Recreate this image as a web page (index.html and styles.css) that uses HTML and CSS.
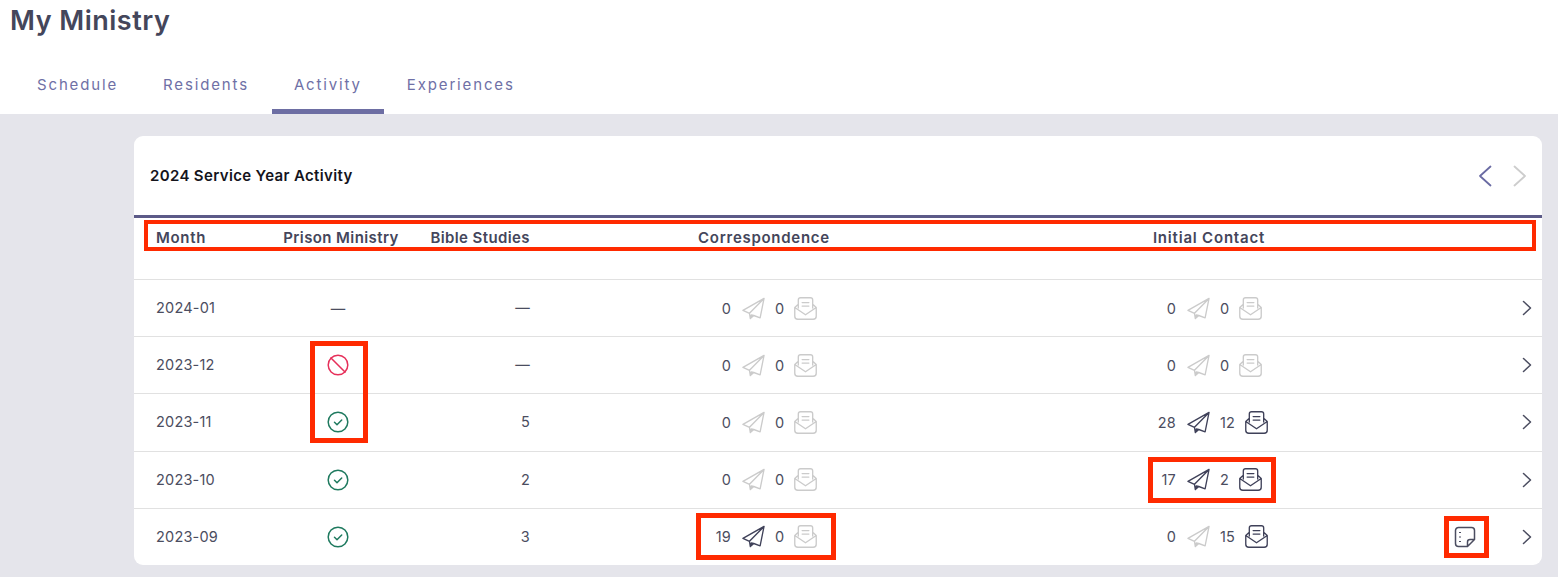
FILE: index.html
```html
<!DOCTYPE html>
<html lang="en">
<head>
<meta charset="utf-8">
<title>My Ministry</title>
<link rel="stylesheet" href="styles.css">
</head>
<body>
<svg class="sprite" aria-hidden="true">
  <symbol id="plane" viewBox="0 0 24 24"><path d="M23 1.500 1 14l6.800 3 .9 5.500 3.600-3.200 6.600 2.400zM23 1.500 7.800 17M8.700 22.500l1-3.700 2.600.5"/></symbol>
  <symbol id="mail" viewBox="0 0 24 24"><path d="M4.500 11.500V3A2.300 2.300 0 0 1 6.800.8h10.400A2.300 2.300 0 0 1 19.500 3v8.500M8.500 5.800h7M8.500 9.500h7M4.500 7.500.8 11v9a3.200 3.200 0 0 0 3.200 3.200h16a3.200 3.200 0 0 0 3.200-3.200v-9l-3.700-3.500M.8 11 12 18.500 23.200 11"/></symbol>
</svg>
<header class="top">
  <h1 class="title">My Ministry</h1>
  <nav class="tabs">
    <a class="tab">Schedule</a>
    <a class="tab">Residents</a>
    <a class="tab tab-active">Activity</a>
    <a class="tab">Experiences</a>
  </nav>
</header>
<main class="content">
  <section class="card">
    <div class="card-head">
      <h2 class="card-title">2024 Service Year Activity</h2>
      <div class="pager">
        <svg class="pager-icon pager-on" viewBox="0 0 14 22"><path d="M12.500 1.500 2 11l10.500 9.500"/></svg>
        <svg class="pager-icon pager-off" viewBox="0 0 14 22"><path d="M1.500 1.500 12 11 1.500 20.500"/></svg>
      </div>
    </div>
    <div class="grid head-row">
      <div class="h-month">Month</div>
      <div class="h-prison">Prison Ministry</div>
      <div class="h-bible">Bible Studies</div>
      <div class="h-corr">Correspondence</div>
      <div class="h-init">Initial Contact</div>
    </div>

    <div class="grid row">
      <div class="month">2024-01</div>
      <div class="prison">—</div>
      <div class="bible">—</div>
      <div class="out">0<svg class="ico off"><use href="#plane"/></svg></div>
      <div class="in">0<svg class="ico off"><use href="#mail"/></svg></div>
      <div class="out">0<svg class="ico off"><use href="#plane"/></svg></div>
      <div class="in">0<svg class="ico off"><use href="#mail"/></svg></div>
      <div class="note"></div>
      <div class="more"><svg class="chev" viewBox="0 0 10 16"><path d="M1.500 1.500 8.500 8l-7 6.500"/></svg></div>
    </div>

    <div class="grid row">
      <div class="month">2023-12</div>
      <div class="prison"><svg class="status ban" viewBox="0 0 22 22"><circle cx="11" cy="11" r="9.800"/><path d="M4 4l14 14"/></svg></div>
      <div class="bible">—</div>
      <div class="out">0<svg class="ico off"><use href="#plane"/></svg></div>
      <div class="in">0<svg class="ico off"><use href="#mail"/></svg></div>
      <div class="out">0<svg class="ico off"><use href="#plane"/></svg></div>
      <div class="in">0<svg class="ico off"><use href="#mail"/></svg></div>
      <div class="note"></div>
      <div class="more"><svg class="chev" viewBox="0 0 10 16"><path d="M1.500 1.500 8.500 8l-7 6.500"/></svg></div>
    </div>

    <div class="grid row">
      <div class="month">2023-11</div>
      <div class="prison"><svg class="status ok" viewBox="0 0 22 22"><circle cx="11" cy="11" r="9.800"/><path d="M7.500 11.300l2.500 2.400 4.700-4.700"/></svg></div>
      <div class="bible">5</div>
      <div class="out">0<svg class="ico off"><use href="#plane"/></svg></div>
      <div class="in">0<svg class="ico off"><use href="#mail"/></svg></div>
      <div class="out">28<svg class="ico on"><use href="#plane"/></svg></div>
      <div class="in">12<svg class="ico on"><use href="#mail"/></svg></div>
      <div class="note"></div>
      <div class="more"><svg class="chev" viewBox="0 0 10 16"><path d="M1.500 1.500 8.500 8l-7 6.500"/></svg></div>
    </div>

    <div class="grid row">
      <div class="month">2023-10</div>
      <div class="prison"><svg class="status ok" viewBox="0 0 22 22"><circle cx="11" cy="11" r="9.800"/><path d="M7.500 11.300l2.500 2.400 4.700-4.700"/></svg></div>
      <div class="bible">2</div>
      <div class="out">0<svg class="ico off"><use href="#plane"/></svg></div>
      <div class="in">0<svg class="ico off"><use href="#mail"/></svg></div>
      <div class="out">17<svg class="ico on"><use href="#plane"/></svg></div>
      <div class="in">2<svg class="ico on"><use href="#mail"/></svg></div>
      <div class="note"></div>
      <div class="more"><svg class="chev" viewBox="0 0 10 16"><path d="M1.500 1.500 8.500 8l-7 6.500"/></svg></div>
    </div>

    <div class="grid row">
      <div class="month">2023-09</div>
      <div class="prison"><svg class="status ok" viewBox="0 0 22 22"><circle cx="11" cy="11" r="9.800"/><path d="M7.500 11.300l2.500 2.400 4.700-4.700"/></svg></div>
      <div class="bible">3</div>
      <div class="out">19<svg class="ico on"><use href="#plane"/></svg></div>
      <div class="in">0<svg class="ico off"><use href="#mail"/></svg></div>
      <div class="out">0<svg class="ico off"><use href="#plane"/></svg></div>
      <div class="in">15<svg class="ico on"><use href="#mail"/></svg></div>
      <div class="note"><svg class="note-ico" viewBox="0 0 22 22"><path d="M13.500 20.500H4.500a3 3 0 0 1-3-3V4.500a3 3 0 0 1 3-3h13a3 3 0 0 1 3 3v9zM20.500 13.500h-4.500a2.500 2.500 0 0 0-2.500 2.500v4.500"/><path class="note-dots" d="M6 6v1M6 10.500v1M6 15v1"/></svg></div>
      <div class="more"><svg class="chev" viewBox="0 0 10 16"><path d="M1.500 1.500 8.500 8l-7 6.500"/></svg></div>
    </div>

    <div class="mark mark-head"></div>
    <div class="mark mark-prison"></div>
    <div class="mark mark-corr"></div>
    <div class="mark mark-init"></div>
    <div class="mark mark-note"></div>
  </section>
</main>
</body>
</html>
```
FILE: styles.css
```css
* { box-sizing: border-box; }
html, body { height: 100%; }
body {
  margin: 0;
  overflow: hidden;
  background: #e5e5eb;
  color: #44465b;
  font-family: Inter, "Liberation Sans", sans-serif;
  font-size: 14.5px;
}
.sprite { display: none; }

.top {
  height: 114px;
  background: #fff;
  padding: 0 0 0 15px;
  display: flex;
  flex-direction: column;
}
.title {
  margin: 0 0 0 -5px;
  height: 71px;
  padding-top: 3px;
  font-size: 27px;
  line-height: 36px;
  font-weight: 600;
  color: #44465b;
  letter-spacing: .5px;
}
.tabs { display: flex; gap: 1px; height: 43px; }
.tab {
  display: block;
  padding: 0 22px;
  height: 43px;
  line-height: 28px;
  font-size: 15px;
  font-weight: 400;
  letter-spacing: 1.850px;
  color: #6f70a6;
}
.tab-active { border-bottom: 5px solid #6d6ea3; }

.content { padding: 22px 16px 0 134px; }
.card {
  position: relative;
  height: 429px;
  background: #fff;
  border-radius: 9px;
  overflow: hidden;
}
.card-head {
  height: 82px;
  border-bottom: 3px solid #5c5a88;
  padding: 0 15px 0 16px;
  display: flex;
  align-items: center;
  justify-content: space-between;
}
.card-title {
  margin: 0;
  font-size: 15px;
  font-weight: 600;
  letter-spacing: .35px;
  color: #14141c;
}
.pager { display: flex; gap: 21px; margin-top: 1px; }
.pager-icon { width: 14px; height: 22px; fill: none; stroke-width: 1.800; stroke-linecap: round; stroke-linejoin: round; }
.pager-on { stroke: #6a6ba3; }
.pager-off { stroke: #cdcdcd; }

.grid {
  display: grid;
  grid-template-columns: 112px 144px 118px 240px 228px 217px 205px 90px 32px;
  padding-left: 22px;
}
.head-row {
  height: 61px;
  padding-top: 11px;
  font-weight: 600;
  font-size: 15px;
  line-height: 18px;
  letter-spacing: .4px;
  color: #44465b;
}
.h-month { letter-spacing: .7px; }
.h-prison { text-align: center; padding-left: 2px; white-space: nowrap; }
.h-bible { text-align: right; white-space: nowrap; }
.h-corr { grid-column: span 2; text-align: center; letter-spacing: .72px; }
.h-init { grid-column: span 2; text-align: center; letter-spacing: .8px; }

.row {
  height: 57.200px;
  border-top: 1px solid #e1e1e1;
  align-items: center;
  color: #4b4d60;
  letter-spacing: .2px;
}
.month, .bible { padding-bottom: 1px; }
.prison { display: flex; justify-content: center; padding-right: 4px; }
.bible { text-align: right; }
.out { display: flex; justify-content: flex-end; align-items: center; padding-right: 5px; gap: 11px; }
.in { display: flex; align-items: center; padding-left: 5px; gap: 10px; }
.ico { width: 23px; height: 23px; fill: none; stroke-width: 1.400; stroke-linejoin: round; stroke-linecap: round; }
.on { stroke: #3f4159; }
.off { stroke: #cbcbcb; }
.status { width: 22px; height: 22px; fill: none; stroke-width: 1.500; stroke-linecap: round; stroke-linejoin: round; }
.ban { stroke: #e6305a; }
.ok { stroke: #1f7a5f; }
.note { display: flex; justify-content: center; }
.note-ico { width: 22px; height: 22px; fill: none; stroke: #4b4d60; stroke-width: 1.500; stroke-linejoin: round; }
.note-dots { stroke-width: 2; }
.more { display: flex; justify-content: center; padding-left: 2px; }
.chev { width: 10px; height: 16px; fill: none; stroke: #4b4d60; stroke-width: 1.500; stroke-linecap: round; stroke-linejoin: round; }

.mark { position: absolute; border: 5px solid #ff2a00; }
.mark-head { left: 10px; top: 84px; width: 1392px; height: 31px; border-width: 4px; }
.mark-prison { left: 176px; top: 205px; width: 58px; height: 102px; }
.mark-corr { left: 562px; top: 377px; width: 140px; height: 47px; }
.mark-init { left: 1014px; top: 321px; width: 128px; height: 46px; }
.mark-note { left: 1310px; top: 380px; width: 45px; height: 42px; }
```
